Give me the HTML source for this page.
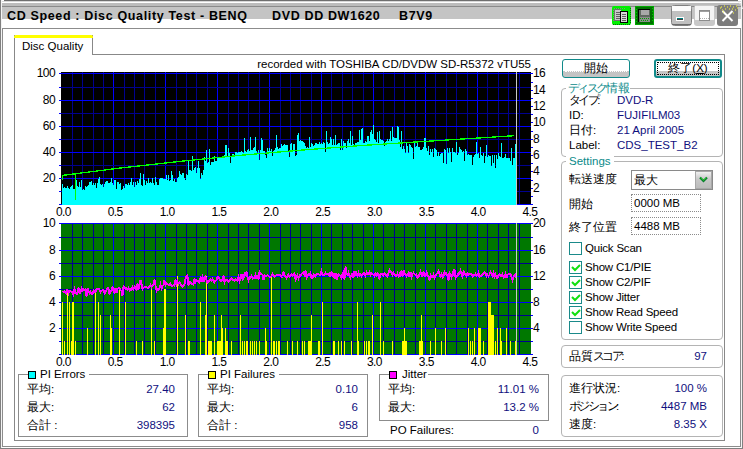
<!DOCTYPE html>
<html><head><meta charset="utf-8">
<style>
html,body{margin:0;padding:0;}
body{width:743px;height:449px;overflow:hidden;position:relative;background:#fff;font-family:"Liberation Sans",sans-serif;font-size:11.5px;color:#000;}
div{position:absolute;box-sizing:border-box;}
.ab{position:absolute;}
.ax,.axr,.axc{font-size:12px;line-height:14px;white-space:nowrap;letter-spacing:-0.6px;}
.axc{width:40px;text-align:center;}
.tk{height:1px;background:#0000ff;}
.t{white-space:nowrap;line-height:14px;}
.blue{color:#10107e;}
.teal{color:#0a8a8a;}
.gb{border:1px solid #b4b4b4;border-radius:4px;}
.gbs{border:1px solid #8c8c8c;}
.kn{letter-spacing:-2.6px;}
.cb{width:13px;height:13px;border:1px solid #1a8a8a;background:#fff;}
</style></head><body>
<!-- window frame -->
<div style="left:0;top:0;width:743px;height:449px;border-left:1px solid #808080;border-right:1px solid #808080;"></div>
<div style="left:1px;top:0;width:1px;height:449px;background:#f4f4f4"></div>
<div style="left:741px;top:0;width:1px;height:449px;background:#f4f4f4"></div>
<!-- title bar -->
<div style="left:4px;top:0;width:734px;height:1px;background:#6e6e6e"></div>
<div style="left:2px;top:1px;width:739px;height:1px;background:#d8d8d8"></div>
<div style="left:2px;top:3px;width:739px;height:3px;background:#bcbcbc"></div>
<div style="left:2px;top:6px;width:739px;height:1px;background:#8a8a8a"></div>
<div style="left:2px;top:7px;width:739px;height:12px;background:#c4c4c4"></div>
<div class="t" style="left:7px;top:10px;font-weight:bold;font-size:12.5px;letter-spacing:0.65px;line-height:13px;">CD Speed : Disc Quality Test - BENQ</div>
<div class="t" style="left:272px;top:10px;font-weight:bold;font-size:12.5px;letter-spacing:0.65px;line-height:13px;">DVD DD DW1620</div>
<div class="t" style="left:399px;top:10px;font-weight:bold;font-size:12.5px;letter-spacing:0.65px;line-height:13px;">B7V9</div>
<!-- title icons -->
<svg class="ab" style="left:609px;top:3px" width="134" height="25">
 <!-- copy icon -->
 <rect x="3" y="3" width="19" height="19" rx="2" fill="#00f000"/>
 <path d="M4 21.5h17M21.5 5v16" stroke="#007000" stroke-dasharray="1 1"/>
 <path d="M5 5.5h12M4.5 7v12" stroke="#70a070" stroke-dasharray="1 1"/>
 <rect x="5" y="6" width="7" height="12" fill="#707070"/><rect x="6" y="7" width="6" height="10" fill="#c8c8c8"/>
 <path d="M7 9.5h4M7 11.5h4M7 13.5h4M7 15.5h4" stroke="#606060"/>
 <rect x="11" y="8" width="8" height="12" fill="#000"/><rect x="12" y="9" width="6" height="10" fill="#d8d8d8"/>
 <path d="M18.5 9v11M12 19.5h7" stroke="#000"/>
 <path d="M13 11.5h4M13 13.5h4M13 15.5h4M13 17.5h4" stroke="#606060"/>
 <!-- save icon -->
 <rect x="26" y="3" width="19" height="19" fill="#007000"/>
 <rect x="26.5" y="3.5" width="18" height="18" fill="none" stroke="#00e000" stroke-dasharray="1 1"/>
 <path d="M27.5 6v14M43.5 5v14" stroke="#00c000" stroke-dasharray="1 2"/>
 <rect x="29" y="6" width="12" height="13" fill="#000"/>
 <rect x="30" y="7" width="11" height="12" fill="#606860"/>
 <rect x="32" y="7" width="8" height="5" fill="#a8a8a8"/>
 <rect x="31" y="14" width="10" height="5" fill="#8c8c8c"/>
 <path d="M31 15.5h9M32 17.5h8" stroke="#00a000" stroke-dasharray="1 1"/>
 <!-- minimize -->
 <rect x="62.5" y="2.5" width="20" height="20" rx="3" fill="#c0c0c0" stroke="#808080"/>
 <rect x="63" y="3" width="19" height="5" fill="#fbfbfb"/>
 <path d="M63 21.5h19" stroke="#6c6c6c"/>
 <rect x="67" y="14" width="8" height="4" fill="#fff"/>
 <path d="M68 15.5h6" stroke="#008080"/>
 <path d="M68 16.5h6" stroke="#404040"/>
 <!-- maximize -->
 <rect x="85" y="2" width="21" height="21" rx="3" fill="#c8c8c8"/>
 <rect x="86" y="3" width="19" height="14" fill="#f4f4f4"/>
 <rect x="90.5" y="7.5" width="10" height="10" fill="#fff" stroke="#8c8c8c"/>
 <path d="M91 8.5h9" stroke="#a0a0a0"/>
 <path d="M91 15.5h9" stroke="#b0b0b0" stroke-dasharray="1 1"/>
 <!-- close -->
 <rect x="108" y="2" width="21" height="21" rx="3" fill="#7c7c7c"/>
</svg>
<svg class="ab" style="left:717px;top:2px" width="26" height="25">
 <path d="M5.5 9L15.5 19M15.5 9L5.5 19" stroke="#fff" stroke-width="2"/>
 <path d="M4 5h1M7 4h1M10 5h1M13 4h1M16 5h1M19 4h1M5 8h1M18 8h1M8 7h1M12 7h1M15 7h1M3 6h1M20 6h1M6 10h1M16 11h1" stroke="#ffff30" stroke-width="1.2"/>
 <path d="M21.5 0Q25 2 25.5 7" stroke="#f0f0f0" fill="none"/>
</svg>
<!-- client border -->
<div style="left:2px;top:28px;width:739px;height:419px;border:1px solid #8c8c8c;"></div>
<div style="left:2px;top:447px;width:739px;height:1px;background:#fff"></div>
<div style="left:0;top:448px;width:743px;height:1px;background:#808080"></div>
<!-- tab page -->
<div style="left:14px;top:54px;width:711px;height:387px;border:1px solid #888;"></div>
<div style="left:14px;top:35px;width:79px;height:20px;background:#fff;border-left:1px solid #888;border-right:1px solid #888;"></div>
<div style="left:14px;top:35px;width:79px;height:3px;background:#ffff00;border-radius:2px 2px 0 0"></div>
<div class="t" style="left:22px;top:39px;font-size:11.5px;">Disc Quality</div>
<div class="t" style="left:230px;top:57px;width:301px;text-align:right;font-size:11.5px;">recorded with TOSHIBA CD/DVDW SD-R5372 vTU55</div>
<!-- charts -->
<svg class="ab" style="left:61px;top:72px" width="470" height="133" shape-rendering="crispEdges">
<rect x="0" y="0" width="470" height="133" fill="#000"/>
<path d="M11.5 0V133" stroke="#000090"/>
<path d="M21.5 0V133" stroke="#000090"/>
<path d="M32.5 0V133" stroke="#000090"/>
<path d="M42.5 0V133" stroke="#000090"/>
<path d="M52.5 0V133" stroke="#0000ff"/>
<path d="M63.5 0V133" stroke="#000090"/>
<path d="M73.5 0V133" stroke="#000090"/>
<path d="M83.5 0V133" stroke="#000090"/>
<path d="M94.5 0V133" stroke="#000090"/>
<path d="M104.5 0V133" stroke="#0000ff"/>
<path d="M115.5 0V133" stroke="#000090"/>
<path d="M125.5 0V133" stroke="#000090"/>
<path d="M135.5 0V133" stroke="#000090"/>
<path d="M146.5 0V133" stroke="#000090"/>
<path d="M156.5 0V133" stroke="#0000ff"/>
<path d="M167.5 0V133" stroke="#000090"/>
<path d="M177.5 0V133" stroke="#000090"/>
<path d="M187.5 0V133" stroke="#000090"/>
<path d="M198.5 0V133" stroke="#000090"/>
<path d="M208.5 0V133" stroke="#0000ff"/>
<path d="M219.5 0V133" stroke="#000090"/>
<path d="M229.5 0V133" stroke="#000090"/>
<path d="M239.5 0V133" stroke="#000090"/>
<path d="M250.5 0V133" stroke="#000090"/>
<path d="M260.5 0V133" stroke="#0000ff"/>
<path d="M270.5 0V133" stroke="#000090"/>
<path d="M281.5 0V133" stroke="#000090"/>
<path d="M291.5 0V133" stroke="#000090"/>
<path d="M302.5 0V133" stroke="#000090"/>
<path d="M312.5 0V133" stroke="#0000ff"/>
<path d="M322.5 0V133" stroke="#000090"/>
<path d="M333.5 0V133" stroke="#000090"/>
<path d="M343.5 0V133" stroke="#000090"/>
<path d="M354.5 0V133" stroke="#000090"/>
<path d="M364.5 0V133" stroke="#0000ff"/>
<path d="M374.5 0V133" stroke="#000090"/>
<path d="M385.5 0V133" stroke="#000090"/>
<path d="M395.5 0V133" stroke="#000090"/>
<path d="M406.5 0V133" stroke="#000090"/>
<path d="M416.5 0V133" stroke="#0000ff"/>
<path d="M426.5 0V133" stroke="#000090"/>
<path d="M437.5 0V133" stroke="#000090"/>
<path d="M447.5 0V133" stroke="#000090"/>
<path d="M458.5 0V133" stroke="#000090"/>
<path d="M0 1.5H470" stroke="#0000ff"/>
<path d="M0 15.5H470" stroke="#000090"/>
<path d="M0 28.5H470" stroke="#0000ff"/>
<path d="M0 41.5H470" stroke="#000090"/>
<path d="M0 54.5H470" stroke="#0000ff"/>
<path d="M0 67.5H470" stroke="#000090"/>
<path d="M0 80.5H470" stroke="#0000ff"/>
<path d="M0 93.5H470" stroke="#000090"/>
<path d="M0 106.5H470" stroke="#0000ff"/>
<path d="M0 119.5H470" stroke="#000090"/>
<path d="M0 132.5H470" stroke="#0000ff"/>
<path d="M1.5 133V111.6 M2.5 133V115.9 M3.5 133V115.3 M4.5 133V116.0 M5.5 133V115.5 M6.5 133V114.2 M7.5 133V116.0 M8.5 133V116.6 M9.5 133V114.6 M10.5 133V114.4 M11.5 133V113.4 M12.5 133V117.1 M13.5 133V116.9 M14.5 133V115.1 M15.5 133V108.0 M16.5 133V114.3 M17.5 133V114.6 M18.5 133V109.6 M19.5 133V115.2 M20.5 133V107.8 M21.5 133V117.9 M22.5 133V117.2 M23.5 133V118.2 M24.5 133V114.3 M25.5 133V114.9 M26.5 133V114.2 M27.5 133V113.3 M28.5 133V110.4 M29.5 133V109.5 M30.5 133V108.5 M31.5 133V113.0 M32.5 133V111.2 M33.5 133V112.6 M34.5 133V110.8 M35.5 133V116.2 M36.5 133V110.7 M37.5 133V107.2 M38.5 133V105.2 M39.5 133V112.2 M40.5 133V112.5 M41.5 133V111.5 M42.5 133V114.6 M43.5 133V112.4 M44.5 133V110.3 M45.5 133V109.1 M46.5 133V108.8 M47.5 133V111.4 M48.5 133V111.2 M49.5 133V110.3 M50.5 133V106.0 M51.5 133V110.8 M52.5 133V113.0 M53.5 133V107.5 M54.5 133V107.6 M55.5 133V117.2 M56.5 133V110.3 M57.5 133V109.6 M58.5 133V112.1 M59.5 133V111.0 M60.5 133V118.3 M61.5 133V117.0 M62.5 133V113.8 M63.5 133V115.9 M64.5 133V112.0 M65.5 133V112.3 M66.5 133V113.4 M67.5 133V110.9 M68.5 133V112.9 M69.5 133V110.0 M70.5 133V106.1 M71.5 133V112.9 M72.5 133V110.3 M73.5 133V114.6 M74.5 133V109.7 M75.5 133V113.0 M76.5 133V109.4 M77.5 133V110.5 M78.5 133V107.2 M79.5 133V100.7 M80.5 133V112.6 M81.5 133V114.0 M82.5 133V102.1 M83.5 133V108.2 M84.5 133V112.9 M85.5 133V108.9 M86.5 133V110.5 M87.5 133V105.6 M88.5 133V110.9 M89.5 133V110.4 M90.5 133V111.1 M91.5 133V105.7 M92.5 133V111.0 M93.5 133V112.6 M94.5 133V104.6 M95.5 133V109.9 M96.5 133V113.3 M97.5 133V112.9 M98.5 133V106.9 M99.5 133V106.4 M100.5 133V105.9 M101.5 133V105.8 M102.5 133V106.8 M103.5 133V106.6 M104.5 133V107.3 M105.5 133V103.2 M106.5 133V108.1 M107.5 133V103.3 M108.5 133V109.3 M109.5 133V107.7 M110.5 133V99.0 M111.5 133V103.1 M112.5 133V108.9 M113.5 133V107.3 M114.5 133V109.9 M115.5 133V109.6 M116.5 133V106.0 M117.5 133V105.0 M118.5 133V99.0 M119.5 133V102.1 M120.5 133V102.5 M121.5 133V100.6 M122.5 133V101.1 M123.5 133V106.0 M124.5 133V107.9 M125.5 133V101.8 M126.5 133V103.4 M127.5 133V89.4 M128.5 133V98.2 M129.5 133V98.2 M130.5 133V98.6 M131.5 133V83.5 M132.5 133V97.6 M133.5 133V95.6 M134.5 133V94.7 M135.5 133V101.2 M136.5 133V96.3 M137.5 133V88.6 M138.5 133V95.8 M139.5 133V106.5 M140.5 133V100.9 M141.5 133V103.1 M142.5 133V97.8 M143.5 133V85.0 M144.5 133V89.1 M145.5 133V77.9 M146.5 133V91.2 M147.5 133V90.3 M148.5 133V77.3 M149.5 133V93.2 M150.5 133V90.2 M151.5 133V89.7 M152.5 133V90.4 M153.5 133V83.8 M154.5 133V88.6 M155.5 133V88.5 M156.5 133V85.4 M157.5 133V86.0 M158.5 133V85.5 M159.5 133V85.5 M160.5 133V84.8 M161.5 133V85.9 M162.5 133V85.5 M163.5 133V82.7 M164.5 133V73.4 M165.5 133V73.4 M166.5 133V84.5 M167.5 133V76.2 M168.5 133V81.4 M169.5 133V91.2 M170.5 133V85.1 M171.5 133V82.1 M172.5 133V82.4 M173.5 133V83.3 M174.5 133V80.0 M175.5 133V80.3 M176.5 133V81.4 M177.5 133V79.6 M178.5 133V80.1 M179.5 133V80.3 M180.5 133V79.1 M181.5 133V80.0 M182.5 133V80.6 M183.5 133V66.3 M184.5 133V79.3 M185.5 133V80.1 M186.5 133V77.8 M187.5 133V77.2 M188.5 133V78.9 M189.5 133V64.8 M190.5 133V78.3 M191.5 133V78.3 M192.5 133V76.0 M193.5 133V75.3 M194.5 133V65.4 M195.5 133V79.1 M196.5 133V81.9 M197.5 133V78.3 M198.5 133V87.6 M199.5 133V78.1 M200.5 133V65.9 M201.5 133V67.5 M202.5 133V79.2 M203.5 133V78.8 M204.5 133V82.8 M205.5 133V86.3 M206.5 133V75.6 M207.5 133V78.7 M208.5 133V76.0 M209.5 133V78.7 M210.5 133V77.0 M211.5 133V83.9 M212.5 133V78.8 M213.5 133V77.5 M214.5 133V76.2 M215.5 133V63.4 M216.5 133V74.6 M217.5 133V76.7 M218.5 133V75.9 M219.5 133V76.1 M220.5 133V71.5 M221.5 133V73.9 M222.5 133V73.2 M223.5 133V72.1 M224.5 133V73.1 M225.5 133V72.6 M226.5 133V73.1 M227.5 133V80.3 M228.5 133V85.4 M229.5 133V72.4 M230.5 133V71.3 M231.5 133V80.1 M232.5 133V72.1 M233.5 133V71.7 M234.5 133V83.5 M235.5 133V82.8 M236.5 133V62.7 M237.5 133V61.0 M238.5 133V68.9 M239.5 133V68.3 M240.5 133V68.5 M241.5 133V68.9 M242.5 133V70.3 M243.5 133V71.3 M244.5 133V73.6 M245.5 133V75.7 M246.5 133V74.6 M247.5 133V75.7 M248.5 133V64.5 M249.5 133V74.8 M250.5 133V71.1 M251.5 133V71.5 M252.5 133V73.8 M253.5 133V73.2 M254.5 133V70.9 M255.5 133V70.8 M256.5 133V71.8 M257.5 133V71.7 M258.5 133V70.1 M259.5 133V71.7 M260.5 133V70.5 M261.5 133V72.2 M262.5 133V69.6 M263.5 133V70.6 M264.5 133V79.6 M265.5 133V58.9 M266.5 133V69.9 M267.5 133V72.4 M268.5 133V71.1 M269.5 133V65.4 M270.5 133V67.1 M271.5 133V72.7 M272.5 133V66.7 M273.5 133V72.6 M274.5 133V62.6 M275.5 133V72.5 M276.5 133V72.2 M277.5 133V70.7 M278.5 133V70.7 M279.5 133V78.0 M280.5 133V66.7 M281.5 133V77.8 M282.5 133V69.2 M283.5 133V70.8 M284.5 133V71.3 M285.5 133V76.2 M286.5 133V69.2 M287.5 133V67.1 M288.5 133V71.1 M289.5 133V59.4 M290.5 133V72.9 M291.5 133V63.7 M292.5 133V72.0 M293.5 133V74.2 M294.5 133V70.9 M295.5 133V71.2 M296.5 133V69.7 M297.5 133V69.8 M298.5 133V57.6 M299.5 133V67.8 M300.5 133V56.8 M301.5 133V56.4 M302.5 133V70.5 M303.5 133V70.6 M304.5 133V68.5 M305.5 133V69.8 M306.5 133V63.6 M307.5 133V64.3 M308.5 133V68.6 M309.5 133V59.5 M310.5 133V57.8 M311.5 133V61.6 M312.5 133V52.9 M313.5 133V67.0 M314.5 133V67.6 M315.5 133V70.1 M316.5 133V59.8 M317.5 133V70.9 M318.5 133V59.1 M319.5 133V66.9 M320.5 133V68.1 M321.5 133V68.4 M322.5 133V69.3 M323.5 133V74.0 M324.5 133V69.7 M325.5 133V69.3 M326.5 133V67.4 M327.5 133V69.0 M328.5 133V67.4 M329.5 133V58.8 M330.5 133V68.5 M331.5 133V55.0 M332.5 133V65.0 M333.5 133V66.0 M334.5 133V65.7 M335.5 133V66.0 M336.5 133V53.8 M337.5 133V55.0 M338.5 133V68.3 M339.5 133V74.8 M340.5 133V58.7 M341.5 133V77.4 M342.5 133V73.9 M343.5 133V76.9 M344.5 133V81.2 M345.5 133V70.8 M346.5 133V73.8 M347.5 133V80.8 M348.5 133V71.5 M349.5 133V72.9 M350.5 133V75.1 M351.5 133V76.2 M352.5 133V86.7 M353.5 133V70.9 M354.5 133V75.0 M355.5 133V74.0 M356.5 133V69.1 M357.5 133V74.8 M358.5 133V74.8 M359.5 133V77.7 M360.5 133V77.5 M361.5 133V77.3 M362.5 133V74.7 M363.5 133V66.1 M364.5 133V66.4 M365.5 133V75.7 M366.5 133V79.2 M367.5 133V73.6 M368.5 133V82.6 M369.5 133V76.7 M370.5 133V79.5 M371.5 133V77.4 M372.5 133V85.2 M373.5 133V75.5 M374.5 133V77.4 M375.5 133V78.4 M376.5 133V83.9 M377.5 133V79.9 M378.5 133V83.7 M379.5 133V81.9 M380.5 133V81.2 M381.5 133V81.0 M382.5 133V91.3 M383.5 133V76.5 M384.5 133V78.2 M385.5 133V91.8 M386.5 133V76.2 M387.5 133V81.3 M388.5 133V75.6 M389.5 133V79.5 M390.5 133V89.9 M391.5 133V75.9 M392.5 133V80.1 M393.5 133V80.1 M394.5 133V80.5 M395.5 133V70.2 M396.5 133V82.8 M397.5 133V80.8 M398.5 133V74.6 M399.5 133V76.5 M400.5 133V78.0 M401.5 133V79.9 M402.5 133V79.2 M403.5 133V88.6 M404.5 133V77.3 M405.5 133V78.8 M406.5 133V82.9 M407.5 133V81.6 M408.5 133V82.7 M409.5 133V82.7 M410.5 133V83.4 M411.5 133V92.8 M412.5 133V84.6 M413.5 133V83.2 M414.5 133V81.8 M415.5 133V69.5 M416.5 133V82.0 M417.5 133V81.4 M418.5 133V86.3 M419.5 133V75.0 M420.5 133V82.7 M421.5 133V83.8 M422.5 133V81.2 M423.5 133V91.2 M424.5 133V83.5 M425.5 133V72.8 M426.5 133V84.6 M427.5 133V83.0 M428.5 133V83.9 M429.5 133V83.7 M430.5 133V93.9 M431.5 133V82.9 M432.5 133V90.7 M433.5 133V83.2 M434.5 133V96.3 M435.5 133V82.9 M436.5 133V86.7 M437.5 133V81.4 M438.5 133V83.5 M439.5 133V84.7 M440.5 133V71.0 M441.5 133V86.2 M442.5 133V85.6 M443.5 133V84.8 M444.5 133V82.1 M445.5 133V86.3 M446.5 133V85.8 M447.5 133V86.4 M448.5 133V85.7 M449.5 133V88.5 M450.5 133V76.4 M451.5 133V93.0 M452.5 133V86.4 M453.5 133V85.7 M454.5 133V72.3 M455.5 133V86.6" stroke="#00ffff" stroke-width="1" fill="none"/>
<path d="M1.5 108V103" stroke="#00ff00"/>
<polyline points="1.5,103.4 59.5,96.0 119.5,89.3 179.5,83.3 239.5,78.2 299.5,73.6 359.5,69.7 453.5,63.7" stroke="#00ff00" stroke-width="1.3" fill="none"/>
<path d="M14.5 101V128" stroke="#00ff00" stroke-width="1.5"/>
<path d="M455.5 0V133" stroke="#c8c8c8"/>
</svg>
<svg class="ab" style="left:61px;top:223px" width="470" height="132" shape-rendering="crispEdges">
<rect x="0" y="0" width="470" height="132" fill="#007800"/>
<path d="M11.5 0V132" stroke="#000090"/>
<path d="M21.5 0V132" stroke="#000090"/>
<path d="M32.5 0V132" stroke="#000090"/>
<path d="M42.5 0V132" stroke="#000090"/>
<path d="M52.5 0V132" stroke="#0000ff"/>
<path d="M63.5 0V132" stroke="#000090"/>
<path d="M73.5 0V132" stroke="#000090"/>
<path d="M83.5 0V132" stroke="#000090"/>
<path d="M94.5 0V132" stroke="#000090"/>
<path d="M104.5 0V132" stroke="#0000ff"/>
<path d="M115.5 0V132" stroke="#000090"/>
<path d="M125.5 0V132" stroke="#000090"/>
<path d="M135.5 0V132" stroke="#000090"/>
<path d="M146.5 0V132" stroke="#000090"/>
<path d="M156.5 0V132" stroke="#0000ff"/>
<path d="M167.5 0V132" stroke="#000090"/>
<path d="M177.5 0V132" stroke="#000090"/>
<path d="M187.5 0V132" stroke="#000090"/>
<path d="M198.5 0V132" stroke="#000090"/>
<path d="M208.5 0V132" stroke="#0000ff"/>
<path d="M219.5 0V132" stroke="#000090"/>
<path d="M229.5 0V132" stroke="#000090"/>
<path d="M239.5 0V132" stroke="#000090"/>
<path d="M250.5 0V132" stroke="#000090"/>
<path d="M260.5 0V132" stroke="#0000ff"/>
<path d="M270.5 0V132" stroke="#000090"/>
<path d="M281.5 0V132" stroke="#000090"/>
<path d="M291.5 0V132" stroke="#000090"/>
<path d="M302.5 0V132" stroke="#000090"/>
<path d="M312.5 0V132" stroke="#0000ff"/>
<path d="M322.5 0V132" stroke="#000090"/>
<path d="M333.5 0V132" stroke="#000090"/>
<path d="M343.5 0V132" stroke="#000090"/>
<path d="M354.5 0V132" stroke="#000090"/>
<path d="M364.5 0V132" stroke="#0000ff"/>
<path d="M374.5 0V132" stroke="#000090"/>
<path d="M385.5 0V132" stroke="#000090"/>
<path d="M395.5 0V132" stroke="#000090"/>
<path d="M406.5 0V132" stroke="#000090"/>
<path d="M416.5 0V132" stroke="#0000ff"/>
<path d="M426.5 0V132" stroke="#000090"/>
<path d="M437.5 0V132" stroke="#000090"/>
<path d="M447.5 0V132" stroke="#000090"/>
<path d="M458.5 0V132" stroke="#000090"/>
<path d="M0 0.5H470" stroke="#0000ff"/>
<path d="M0 14.5H470" stroke="#000090"/>
<path d="M0 27.5H470" stroke="#0000ff"/>
<path d="M0 40.5H470" stroke="#000090"/>
<path d="M0 53.5H470" stroke="#0000ff"/>
<path d="M0 66.5H470" stroke="#000090"/>
<path d="M0 79.5H470" stroke="#0000ff"/>
<path d="M0 92.5H470" stroke="#000090"/>
<path d="M0 105.5H470" stroke="#0000ff"/>
<path d="M0 118.5H470" stroke="#000090"/>
<path d="M0 131.5H470" stroke="#0000ff"/>
<path d="M1.5 132V79.3 M3.5 132V118.4 M6.5 132V66.2 M8.5 132V79.3 M10.5 132V118.4 M11.5 132V79.3 M12.5 132V79.3 M14.5 132V118.4 M26.5 132V105.4 M34.5 132V66.2 M37.5 132V79.3 M39.5 132V92.3 M49.5 132V92.3 M50.5 132V105.4 M58.5 132V66.2 M64.5 132V79.3 M75.5 132V118.4 M81.5 132V118.4 M90.5 132V66.2 M93.5 132V118.4 M102.5 132V105.4 M103.5 132V66.2 M104.5 132V66.2 M116.5 132V53.1 M124.5 132V92.3 M127.5 132V118.4 M128.5 132V118.4 M139.5 132V79.3 M144.5 132V92.3 M145.5 132V53.1 M147.5 132V118.4 M148.5 132V118.4 M149.5 132V118.4 M150.5 132V118.4 M153.5 132V92.3 M156.5 132V118.4 M157.5 132V118.4 M158.5 132V118.4 M159.5 132V118.4 M160.5 132V92.3 M161.5 132V105.4 M164.5 132V105.4 M165.5 132V118.4 M166.5 132V118.4 M170.5 132V118.4 M179.5 132V92.3 M181.5 132V118.4 M183.5 132V118.4 M185.5 132V118.4 M186.5 132V118.4 M189.5 132V118.4 M191.5 132V118.4 M193.5 132V118.4 M195.5 132V118.4 M198.5 132V118.4 M204.5 132V105.4 M205.5 132V118.4 M210.5 132V53.1 M212.5 132V118.4 M213.5 132V118.4 M215.5 132V118.4 M217.5 132V118.4 M218.5 132V118.4 M226.5 132V118.4 M231.5 132V118.4 M236.5 132V118.4 M241.5 132V118.4 M243.5 132V118.4 M247.5 132V118.4 M248.5 132V118.4 M249.5 132V118.4 M250.5 132V92.3 M257.5 132V118.4 M258.5 132V118.4 M261.5 132V79.3 M272.5 132V118.4 M273.5 132V118.4 M277.5 132V118.4 M280.5 132V118.4 M283.5 132V118.4 M290.5 132V118.4 M296.5 132V79.3 M297.5 132V118.4 M303.5 132V118.4 M305.5 132V118.4 M307.5 132V118.4 M308.5 132V118.4 M311.5 132V92.3 M319.5 132V79.3 M322.5 132V118.4 M331.5 132V118.4 M341.5 132V118.4 M342.5 132V118.4 M343.5 132V105.4 M344.5 132V118.4 M345.5 132V118.4 M358.5 132V118.4 M359.5 132V118.4 M360.5 132V92.3 M361.5 132V118.4 M369.5 132V118.4 M374.5 132V105.4 M380.5 132V118.4 M384.5 132V105.4 M407.5 132V105.4 M409.5 132V118.4 M411.5 132V118.4 M413.5 132V105.4 M417.5 132V105.4 M418.5 132V105.4 M419.5 132V105.4 M422.5 132V118.4 M427.5 132V79.3 M428.5 132V79.3 M429.5 132V79.3 M430.5 132V92.3 M431.5 132V92.3 M432.5 132V92.3 M434.5 132V118.4 M436.5 132V105.4 M439.5 132V105.4 M440.5 132V118.4 M445.5 132V105.4 M449.5 132V118.4 M454.5 132V118.4" stroke="#ffff00" fill="none"/>
<polyline points="1.5,68.5 2.5,68.7 3.5,68.3 4.5,69.8 5.5,70.6 6.5,66.2 7.5,70.4 8.5,68.0 9.5,68.0 10.5,69.2 11.5,69.4 12.5,71.5 13.5,65.6 14.5,68.4 15.5,71.3 16.5,70.9 17.5,64.0 18.5,70.1 19.5,69.7 20.5,65.4 21.5,67.6 22.5,66.0 23.5,66.7 24.5,66.2 25.5,73.5 26.5,65.1 27.5,67.8 28.5,70.1 29.5,68.8 30.5,70.7 31.5,71.2 32.5,67.5 33.5,68.7 34.5,69.1 35.5,65.7 36.5,65.7 37.5,65.6 38.5,66.4 39.5,69.2 40.5,67.8 41.5,67.2 42.5,66.6 43.5,70.5 44.5,68.8 45.5,66.6 46.5,65.2 47.5,65.1 48.5,71.5 49.5,67.8 50.5,67.9 51.5,63.6 52.5,67.8 53.5,69.5 54.5,64.8 55.5,70.3 56.5,65.9 57.5,64.9 58.5,65.2 59.5,66.8 60.5,68.0 61.5,73.2 62.5,63.1 63.5,63.7 64.5,66.0 65.5,65.3 66.5,66.3 67.5,64.7 68.5,67.5 69.5,66.3 70.5,66.7 71.5,63.9 72.5,65.9 73.5,63.6 74.5,64.5 75.5,67.6 76.5,60.3 77.5,66.4 78.5,62.7 79.5,56.7 80.5,61.0 81.5,66.2 82.5,65.0 83.5,63.9 84.5,63.9 85.5,64.1 86.5,64.7 87.5,64.7 88.5,63.1 89.5,61.8 90.5,64.2 91.5,62.4 92.5,61.1 93.5,56.6 94.5,62.2 95.5,67.8 96.5,65.8 97.5,66.7 98.5,64.9 99.5,61.5 100.5,65.6 101.5,63.2 102.5,62.2 103.5,57.1 104.5,62.4 105.5,60.4 106.5,61.0 107.5,62.1 108.5,61.6 109.5,60.7 110.5,62.5 111.5,63.2 112.5,62.1 113.5,63.1 114.5,56.2 115.5,61.5 116.5,58.5 117.5,61.1 118.5,59.5 119.5,61.3 120.5,62.5 121.5,63.8 122.5,62.7 123.5,61.7 124.5,55.7 125.5,53.1 126.5,52.5 127.5,62.5 128.5,58.8 129.5,59.1 130.5,60.7 131.5,60.8 132.5,61.5 133.5,55.6 134.5,58.9 135.5,57.1 136.5,58.5 137.5,58.0 138.5,59.4 139.5,54.7 140.5,56.6 141.5,53.9 142.5,59.3 143.5,54.7 144.5,53.7 145.5,57.3 146.5,59.7 147.5,59.3 148.5,57.3 149.5,56.4 150.5,57.5 151.5,55.7 152.5,58.3 153.5,59.4 154.5,57.5 155.5,57.2 156.5,53.5 157.5,53.6 158.5,55.6 159.5,58.3 160.5,57.6 161.5,56.6 162.5,52.5 163.5,59.2 164.5,56.6 165.5,57.1 166.5,56.9 167.5,58.6 168.5,57.3 169.5,56.4 170.5,55.4 171.5,56.9 172.5,56.7 173.5,57.9 174.5,56.1 175.5,56.5 176.5,57.9 177.5,54.2 178.5,57.8 179.5,54.4 180.5,50.8 181.5,56.6 182.5,55.3 183.5,50.8 184.5,52.0 185.5,48.7 186.5,53.8 187.5,57.4 188.5,54.5 189.5,55.1 190.5,53.0 191.5,55.5 192.5,54.7 193.5,54.7 194.5,52.0 195.5,56.2 196.5,51.8 197.5,56.8 198.5,48.7 199.5,50.2 200.5,51.4 201.5,51.8 202.5,57.2 203.5,52.0 204.5,52.7 205.5,52.8 206.5,52.0 207.5,53.1 208.5,54.2 209.5,54.1 210.5,52.8 211.5,50.9 212.5,53.0 213.5,53.5 214.5,52.6 215.5,52.3 216.5,51.8 217.5,51.6 218.5,52.3 219.5,51.9 220.5,54.1 221.5,53.5 222.5,48.5 223.5,52.4 224.5,53.4 225.5,55.4 226.5,53.2 227.5,51.6 228.5,53.9 229.5,53.0 230.5,51.6 231.5,52.5 232.5,51.4 233.5,50.1 234.5,57.0 235.5,54.8 236.5,52.4 237.5,55.5 238.5,52.4 239.5,52.7 240.5,50.6 241.5,50.2 242.5,49.1 243.5,51.8 244.5,47.4 245.5,55.0 246.5,53.5 247.5,51.1 248.5,52.0 249.5,49.9 250.5,55.4 251.5,55.3 252.5,51.3 253.5,52.2 254.5,53.5 255.5,50.9 256.5,50.5 257.5,51.5 258.5,51.9 259.5,52.1 260.5,48.3 261.5,51.7 262.5,52.2 263.5,52.1 264.5,49.8 265.5,51.1 266.5,51.2 267.5,51.6 268.5,50.5 269.5,53.9 270.5,49.1 271.5,49.5 272.5,54.0 273.5,54.6 274.5,49.7 275.5,56.7 276.5,53.9 277.5,51.4 278.5,52.4 279.5,52.9 280.5,54.9 281.5,50.9 282.5,49.2 283.5,56.8 284.5,43.6 285.5,51.3 286.5,51.9 287.5,49.5 288.5,53.0 289.5,54.7 290.5,51.6 291.5,50.9 292.5,54.9 293.5,47.8 294.5,51.7 295.5,50.0 296.5,52.6 297.5,49.7 298.5,53.0 299.5,51.8 300.5,53.2 301.5,51.4 302.5,50.0 303.5,50.5 304.5,52.7 305.5,49.4 306.5,51.4 307.5,50.9 308.5,49.2 309.5,52.4 310.5,50.4 311.5,51.4 312.5,51.6 313.5,53.3 314.5,49.5 315.5,53.6 316.5,49.3 317.5,53.6 318.5,55.5 319.5,50.9 320.5,50.8 321.5,51.3 322.5,52.4 323.5,50.3 324.5,51.8 325.5,52.7 326.5,53.5 327.5,50.3 328.5,47.2 329.5,48.9 330.5,49.2 331.5,52.1 332.5,50.0 333.5,51.5 334.5,53.2 335.5,52.8 336.5,50.6 337.5,53.3 338.5,51.0 339.5,54.0 340.5,47.5 341.5,53.9 342.5,47.3 343.5,50.3 344.5,51.5 345.5,53.2 346.5,52.0 347.5,50.3 348.5,54.3 349.5,49.0 350.5,54.3 351.5,51.4 352.5,49.8 353.5,51.1 354.5,52.1 355.5,51.2 356.5,55.6 357.5,51.7 358.5,52.5 359.5,48.6 360.5,50.9 361.5,54.0 362.5,48.1 363.5,53.2 364.5,53.3 365.5,49.3 366.5,51.9 367.5,53.6 368.5,57.7 369.5,52.2 370.5,53.9 371.5,53.8 372.5,51.5 373.5,55.0 374.5,53.2 375.5,50.9 376.5,50.2 377.5,47.9 378.5,51.7 379.5,53.5 380.5,51.2 381.5,54.5 382.5,53.8 383.5,49.1 384.5,51.1 385.5,50.5 386.5,53.2 387.5,57.5 388.5,49.7 389.5,51.4 390.5,54.4 391.5,50.3 392.5,53.1 393.5,45.9 394.5,54.9 395.5,53.2 396.5,52.6 397.5,50.4 398.5,51.1 399.5,47.8 400.5,51.4 401.5,53.5 402.5,48.4 403.5,49.7 404.5,52.1 405.5,53.2 406.5,50.3 407.5,51.7 408.5,51.2 409.5,50.8 410.5,50.7 411.5,53.5 412.5,52.3 413.5,52.4 414.5,50.6 415.5,52.9 416.5,52.3 417.5,49.8 418.5,53.7 419.5,53.2 420.5,52.8 421.5,51.1 422.5,50.6 423.5,48.9 424.5,50.0 425.5,53.0 426.5,51.6 427.5,53.3 428.5,51.6 429.5,48.7 430.5,50.8 431.5,53.0 432.5,49.9 433.5,54.1 434.5,51.7 435.5,54.6 436.5,54.8 437.5,52.2 438.5,51.5 439.5,52.8 440.5,53.4 441.5,51.3 442.5,54.5 443.5,53.4 444.5,50.6 445.5,55.1 446.5,51.6 447.5,51.3 448.5,50.5 449.5,50.8 450.5,53.8 451.5,57.1 452.5,53.5 453.5,52.1 454.5,53.2 455.5,49.8" stroke="#ff00ff" stroke-width="1.8" fill="none"/>
<path d="M455.5 0V132" stroke="#c8c8c8"/>
</svg>
<div class="axr" style="right:688px;top:66px">100</div>
<div class="axr" style="right:688px;top:93px">80</div>
<div class="axr" style="right:688px;top:119px">60</div>
<div class="axr" style="right:688px;top:145px">40</div>
<div class="axr" style="right:688px;top:171px">20</div>
<div class="axr" style="right:688px;top:216px">10</div>
<div class="axr" style="right:688px;top:243px">8</div>
<div class="axr" style="right:688px;top:269px">6</div>
<div class="axr" style="right:688px;top:295px">4</div>
<div class="axr" style="right:688px;top:321px">2</div>
<div class="ax" style="left:533px;top:66px">16</div>
<div class="ax" style="left:533px;top:83px">14</div>
<div class="ax" style="left:533px;top:99px">12</div>
<div class="ax" style="left:533px;top:115px">10</div>
<div class="ax" style="left:533px;top:132px">8</div>
<div class="ax" style="left:533px;top:148px">6</div>
<div class="ax" style="left:533px;top:164px">4</div>
<div class="ax" style="left:533px;top:181px">2</div>
<div class="ax" style="left:533px;top:216px">20</div>
<div class="ax" style="left:533px;top:243px">16</div>
<div class="ax" style="left:533px;top:269px">12</div>
<div class="ax" style="left:533px;top:295px">8</div>
<div class="ax" style="left:533px;top:321px">4</div>
<div class="axc" style="left:43.4px;top:205px">0.0</div>
<div class="axc" style="left:43.4px;top:355px">0.0</div>
<div class="axc" style="left:95.2px;top:205px">0.5</div>
<div class="axc" style="left:95.2px;top:355px">0.5</div>
<div class="axc" style="left:147.1px;top:205px">1.0</div>
<div class="axc" style="left:147.1px;top:355px">1.0</div>
<div class="axc" style="left:198.9px;top:205px">1.5</div>
<div class="axc" style="left:198.9px;top:355px">1.5</div>
<div class="axc" style="left:250.8px;top:205px">2.0</div>
<div class="axc" style="left:250.8px;top:355px">2.0</div>
<div class="axc" style="left:302.6px;top:205px">2.5</div>
<div class="axc" style="left:302.6px;top:355px">2.5</div>
<div class="axc" style="left:354.4px;top:205px">3.0</div>
<div class="axc" style="left:354.4px;top:355px">3.0</div>
<div class="axc" style="left:406.3px;top:205px">3.5</div>
<div class="axc" style="left:406.3px;top:355px">3.5</div>
<div class="axc" style="left:458.1px;top:205px">4.0</div>
<div class="axc" style="left:458.1px;top:355px">4.0</div>
<div class="axc" style="left:510.0px;top:205px">4.5</div>
<div class="axc" style="left:510.0px;top:355px">4.5</div>
<div class="tk" style="left:59px;top:73px;width:2px"></div>
<div class="tk" style="left:59px;top:87px;width:2px"></div>
<div class="tk" style="left:59px;top:100px;width:2px"></div>
<div class="tk" style="left:59px;top:113px;width:2px"></div>
<div class="tk" style="left:59px;top:126px;width:2px"></div>
<div class="tk" style="left:59px;top:139px;width:2px"></div>
<div class="tk" style="left:59px;top:152px;width:2px"></div>
<div class="tk" style="left:59px;top:165px;width:2px"></div>
<div class="tk" style="left:59px;top:178px;width:2px"></div>
<div class="tk" style="left:59px;top:191px;width:2px"></div>
<div class="tk" style="left:59px;top:204px;width:2px"></div>
<div class="tk" style="left:531px;top:73px;width:2px"></div>
<div class="tk" style="left:531px;top:82px;width:2px"></div>
<div class="tk" style="left:531px;top:90px;width:2px"></div>
<div class="tk" style="left:531px;top:98px;width:2px"></div>
<div class="tk" style="left:531px;top:106px;width:2px"></div>
<div class="tk" style="left:531px;top:114px;width:2px"></div>
<div class="tk" style="left:531px;top:122px;width:2px"></div>
<div class="tk" style="left:531px;top:131px;width:2px"></div>
<div class="tk" style="left:531px;top:139px;width:2px"></div>
<div class="tk" style="left:531px;top:147px;width:2px"></div>
<div class="tk" style="left:531px;top:155px;width:2px"></div>
<div class="tk" style="left:531px;top:163px;width:2px"></div>
<div class="tk" style="left:531px;top:171px;width:2px"></div>
<div class="tk" style="left:531px;top:180px;width:2px"></div>
<div class="tk" style="left:531px;top:188px;width:2px"></div>
<div class="tk" style="left:531px;top:196px;width:2px"></div>
<div class="tk" style="left:531px;top:204px;width:2px"></div>
<div class="tk" style="left:59px;top:223px;width:2px"></div>
<div class="tk" style="left:531px;top:223px;width:2px"></div>
<div class="tk" style="left:59px;top:237px;width:2px"></div>
<div class="tk" style="left:531px;top:237px;width:2px"></div>
<div class="tk" style="left:59px;top:250px;width:2px"></div>
<div class="tk" style="left:531px;top:250px;width:2px"></div>
<div class="tk" style="left:59px;top:263px;width:2px"></div>
<div class="tk" style="left:531px;top:263px;width:2px"></div>
<div class="tk" style="left:59px;top:276px;width:2px"></div>
<div class="tk" style="left:531px;top:276px;width:2px"></div>
<div class="tk" style="left:59px;top:289px;width:2px"></div>
<div class="tk" style="left:531px;top:289px;width:2px"></div>
<div class="tk" style="left:59px;top:302px;width:2px"></div>
<div class="tk" style="left:531px;top:302px;width:2px"></div>
<div class="tk" style="left:59px;top:315px;width:2px"></div>
<div class="tk" style="left:531px;top:315px;width:2px"></div>
<div class="tk" style="left:59px;top:328px;width:2px"></div>
<div class="tk" style="left:531px;top:328px;width:2px"></div>
<div class="tk" style="left:59px;top:341px;width:2px"></div>
<div class="tk" style="left:531px;top:341px;width:2px"></div>
<div class="tk" style="left:59px;top:354px;width:2px"></div>
<div class="tk" style="left:531px;top:354px;width:2px"></div>
<!-- bottom-left groups -->
<div class="gbs" style="left:18px;top:374px;width:170px;height:63px;"></div>
<div style="left:28px;top:369px;width:61px;height:10px;background:#fff"></div>
<div style="left:28px;top:371px;width:8px;height:8px;background:#00ffff;border:1px solid #000"></div>
<div class="t" style="left:40px;top:367px;">PI Errors</div>
<div class="t" style="left:27px;top:382px;">平均:</div>
<div class="t blue" style="left:100px;top:382px;width:75px;text-align:right">27.40</div>
<div class="t" style="left:27px;top:400px;">最大:</div>
<div class="t blue" style="left:100px;top:400px;width:75px;text-align:right">62</div>
<div class="t" style="left:27px;top:418px;">合計 :</div>
<div class="t blue" style="left:100px;top:418px;width:75px;text-align:right">398395</div>

<div class="gbs" style="left:198px;top:374px;width:170px;height:63px;"></div>
<div style="left:208px;top:369px;width:71px;height:10px;background:#fff"></div>
<div style="left:208px;top:371px;width:8px;height:8px;background:#ffff00;border:1px solid #000"></div>
<div class="t" style="left:220px;top:367px;">PI Failures</div>
<div class="t" style="left:207px;top:382px;">平均:</div>
<div class="t blue" style="left:280px;top:382px;width:78px;text-align:right">0.10</div>
<div class="t" style="left:207px;top:400px;">最大:</div>
<div class="t blue" style="left:280px;top:400px;width:78px;text-align:right">6</div>
<div class="t" style="left:207px;top:418px;">合計 :</div>
<div class="t blue" style="left:280px;top:418px;width:78px;text-align:right">958</div>

<div class="gbs" style="left:379px;top:374px;width:170px;height:47px;"></div>
<div style="left:389px;top:369px;width:39px;height:10px;background:#fff"></div>
<div style="left:389px;top:371px;width:8px;height:8px;background:#ff00ff;border:1px solid #000"></div>
<div class="t" style="left:402px;top:367px;">Jitter</div>
<div class="t" style="left:388px;top:382px;">平均:</div>
<div class="t blue" style="left:460px;top:382px;width:79px;text-align:right">11.01 %</div>
<div class="t" style="left:388px;top:400px;">最大:</div>
<div class="t blue" style="left:460px;top:400px;width:79px;text-align:right">13.2 %</div>
<div class="t" style="left:390px;top:423px;">PO Failures:</div>
<div class="t blue" style="left:460px;top:423px;width:79px;text-align:right">0</div>

<!-- right panel -->
<div style="left:562px;top:59px;width:68px;height:19px;border:1px solid #108a8a;border-radius:3px;background:linear-gradient(#fff 0,#fff 11px,#c4c4c4 11px,#c4c4c4 100%);"></div>
<div style="left:565px;top:71px;width:62px;height:1px;border-top:1px dotted #fff"></div>
<div class="t" style="left:562px;top:61px;width:68px;text-align:center">開始</div>
<div style="left:654px;top:59px;width:68px;height:19px;border:2px solid #108a8a;border-radius:3px;background:linear-gradient(#fff 0,#fff 10px,#c4c4c4 10px,#c4c4c4 100%);"></div>
<div style="left:657px;top:62px;width:62px;height:13px;border:1px dotted #000"></div>
<div class="t" style="left:654px;top:61px;width:68px;text-align:center">終了(<u>X</u>)</div>

<div class="gb" style="left:561px;top:88px;width:162px;height:69px;"></div>
<div style="left:566px;top:82px;width:64px;height:12px;background:#fff"></div>
<div class="t teal" style="left:568px;top:81px;"><span class="kn">ディスク</span>情報</div>
<div class="t" style="left:569px;top:93px;"><span class="kn">タイプ</span>:</div>
<div class="t blue" style="left:617px;top:93px;">DVD-R</div>
<div class="t" style="left:569px;top:108px;">ID:</div>
<div class="t blue" style="left:617px;top:108px;">FUJIFILM03</div>
<div class="t" style="left:569px;top:123px;">日付:</div>
<div class="t blue" style="left:617px;top:123px;">21 April 2005</div>
<div class="t" style="left:569px;top:138px;">Label:</div>
<div class="t blue" style="left:617px;top:138px;">CDS_TEST_B2</div>

<div class="gb" style="left:561px;top:161px;width:162px;height:179px;"></div>
<div style="left:566px;top:155px;width:48px;height:12px;background:#fff"></div>
<div class="t teal" style="left:569px;top:154px;">Settings</div>
<div class="t" style="left:569px;top:172px;">転送速度</div>
<div style="left:631px;top:170px;width:82px;height:20px;border:1px solid #8a8a8a;"></div>
<div class="t" style="left:634px;top:173px;">最大</div>
<div style="left:695px;top:171px;width:17px;height:18px;background:linear-gradient(#f0f0f0,#c8c8c8 45%,#bcbcbc);border:1px solid #a8a8a8"></div>
<svg class="ab" style="left:695px;top:171px" width="17" height="18"><path d="M5 6.5l3.5 3.5 3.5-3.5" stroke="#0a7a30" stroke-width="2.2" fill="none"/><path d="M5.5 6.5l3 3 3-3" stroke="#20d020" stroke-width="1" fill="none"/></svg>
<div class="t" style="left:569px;top:197px;">開始</div>
<div style="left:631px;top:194px;width:70px;height:18px;border:1px dotted #8c8c8c;"></div>
<div class="t" style="left:634px;top:196px;">0000 MB</div>
<div class="t" style="left:569px;top:220px;">終了位置</div>
<div style="left:631px;top:217px;width:70px;height:18px;border:1px dotted #8c8c8c;"></div>
<div class="t" style="left:634px;top:219px;">4488 MB</div>

<div class="cb" style="left:569px;top:242px;"></div>
<div class="t" style="left:585px;top:241px;letter-spacing:-0.2px;">Quick Scan</div>
<div class="cb" style="left:569px;top:261px;"></div>
<div class="t" style="left:585px;top:260px;letter-spacing:-0.2px;">Show C1/PIE</div>
<div class="cb" style="left:569px;top:276px;"></div>
<div class="t" style="left:585px;top:275px;letter-spacing:-0.2px;">Show C2/PIF</div>
<div class="cb" style="left:569px;top:291px;"></div>
<div class="t" style="left:585px;top:290px;letter-spacing:-0.2px;">Show Jitter</div>
<div class="cb" style="left:569px;top:306px;"></div>
<div class="t" style="left:585px;top:305px;letter-spacing:-0.2px;">Show Read Speed</div>
<div class="cb" style="left:569px;top:321px;"></div>
<div class="t" style="left:585px;top:320px;letter-spacing:-0.2px;">Show Write Speed</div>
<svg class="ab" style="left:569px;top:261px" width="13" height="60"><g stroke="#10e010" stroke-width="2" fill="none"><path d="M3 6l3 3 5-5"/><path d="M3 21l3 3 5-5"/><path d="M3 36l3 3 5-5"/><path d="M3 51l3 3 5-5"/></g></svg>

<div class="gb" style="left:561px;top:345px;width:162px;height:23px;"></div>
<div class="t" style="left:569px;top:349px;">品質<span class="kn">スコア</span>:</div>
<div class="t blue" style="left:650px;top:349px;width:57px;text-align:right">97</div>

<div class="gb" style="left:561px;top:375px;width:162px;height:62px;"></div>
<div class="t" style="left:569px;top:381px;">進行状況:</div>
<div class="t blue" style="left:640px;top:381px;width:67px;text-align:right">100 %</div>
<div class="t" style="left:569px;top:399px;"><span class="kn">ポジション</span>:</div>
<div class="t blue" style="left:640px;top:399px;width:67px;text-align:right">4487 MB</div>
<div class="t" style="left:569px;top:417px;">速度:</div>
<div class="t blue" style="left:640px;top:417px;width:67px;text-align:right">8.35 X</div>
</body></html>
